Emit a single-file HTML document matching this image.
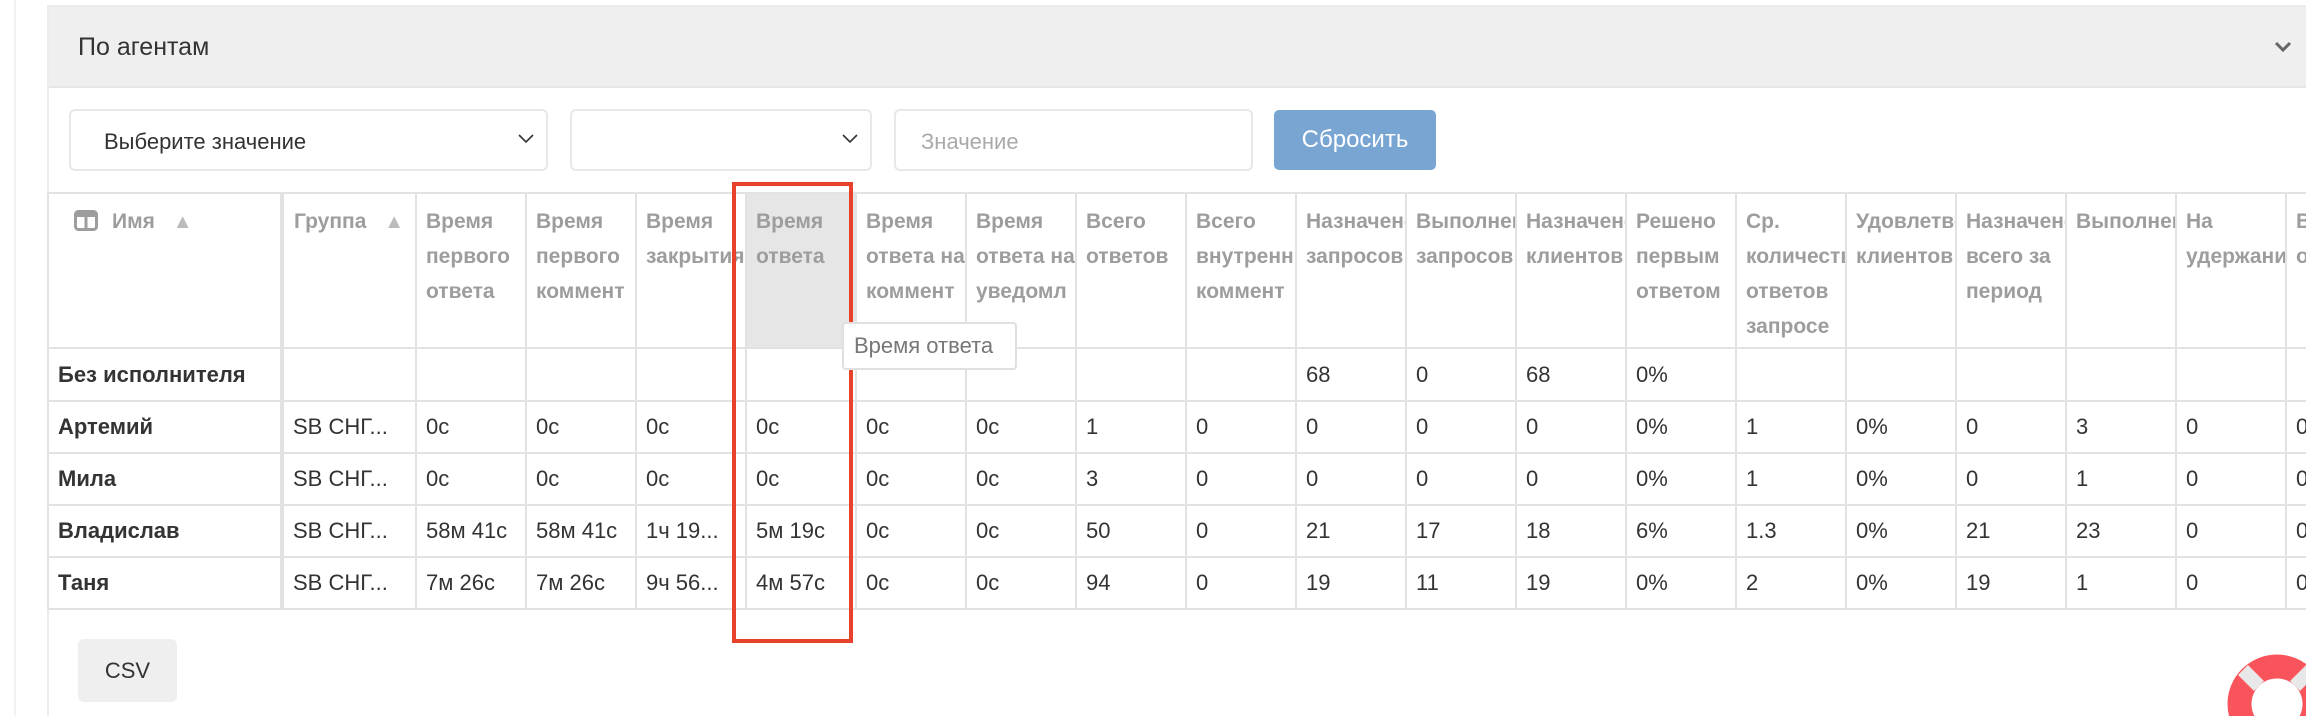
<!DOCTYPE html>
<html style="overflow:hidden"><head><meta charset="utf-8"><style>
*{box-sizing:border-box;margin:0;padding:0}
html,body{width:2306px;height:716px;overflow:hidden}
body{background:#fff;font-family:"Liberation Sans",Arial,sans-serif;position:relative}
.abs{position:absolute}
.vline{left:14px;top:0;width:2px;height:716px;background:#f2f2f2}
.panel{left:47px;top:5px;width:2300px;height:740px;border:2px solid #ececec;background:#fff}
.phead{left:49px;top:7px;width:2300px;height:81px;background:#efefef;border-bottom:2px solid #e6e6e6}
.title{left:78px;top:33px;font-size:25px;color:#333}
.sel{border:2px solid #e8e8e8;border-radius:6px;background:#fff;height:62px;top:109px;font-size:22px;color:#333}
.sel span{position:absolute;left:33px;top:18px}
.chev{position:absolute;top:22px}
.btn{left:1274px;top:110px;width:162px;height:60px;background:#79a5d3;border-radius:5px;color:#fff;font-size:24px;text-align:center;line-height:60px}
table{position:absolute;left:47px;top:192px;width:2348px;border-collapse:collapse;table-layout:fixed;font-size:22px}
td,th{border:2px solid #e2e2e2;overflow:hidden;white-space:nowrap;padding:0 9px;text-align:left}
th{vertical-align:top;height:155px;color:#9d9d9d;font-weight:bold;white-space:normal;line-height:35px;padding-top:10px;font-size:21px}
th div{width:118px}
td{height:52px;color:#333}
td.n{font-weight:bold;border-right:4px solid #e2e2e2}
th.n{border-right:4px solid #e2e2e2}
.hl{background:#e6e6e6}
.red{left:732px;top:182px;width:121px;height:461px;border:4px solid #e8412c}
.tip{left:842px;top:322px;width:175px;height:48px;border:2px solid #e0e0e0;border-radius:4px;background:#fff;color:#777;font-size:22px;line-height:44px;padding-left:10px;white-space:nowrap}
.csv{left:78px;top:639px;width:99px;height:63px;background:#efefef;border-radius:6px;text-align:center;line-height:63px;font-size:22px;color:#333}
</style></head><body>
<div class="abs vline"></div>
<div class="abs panel"></div>
<div class="abs phead"></div>
<div class="abs title">По агентам</div>
<svg class="abs" style="left:2274px;top:41px" width="18" height="12"><path d="M2 2 L9 9 L16 2" stroke="#666" stroke-width="3" fill="none"/></svg>
<div class="abs sel" style="left:69px;width:479px"><span>Выберите значение</span><svg class="chev" style="left:447px" width="16" height="12"><path d="M1 2 L8 9 L15 2" stroke="#333" stroke-width="1.6" fill="none"/></svg></div>
<div class="abs sel" style="left:570px;width:302px"><svg class="chev" style="left:270px" width="16" height="12"><path d="M1 2 L8 9 L15 2" stroke="#333" stroke-width="1.6" fill="none"/></svg></div>
<div class="abs sel" style="left:894px;width:359px;color:#aaa"><span style="left:25px">Значение</span></div>
<div class="abs btn">Сбросить</div>
<table>
<colgroup><col style="width:234px"><col style="width:134px"><col span="18" style="width:110px"></colgroup>
<tr>
<th class="n" style="padding-left:25px;white-space:nowrap"><svg width="24" height="21" style="vertical-align:-3px;margin-right:14px"><rect x="1.5" y="1.5" width="21" height="18" rx="3" fill="none" stroke="#9d9d9d" stroke-width="3"/><line x1="12" y1="2" x2="12" y2="19" stroke="#9d9d9d" stroke-width="3"/><rect x="2" y="2" width="20" height="5" fill="#9d9d9d"/></svg>Имя <span style="color:#bbb;font-size:20px;margin-left:12px">▲</span></th>
<th style="white-space:nowrap;padding-left:10px">Группа <span style="color:#bbb;font-size:20px;margin-left:12px">▲</span></th>
<th><div>Время первого ответа</div></th>
<th><div>Время первого коммент</div></th>
<th><div>Время закрытия</div></th>
<th class="hl"><div>Время ответа</div></th>
<th><div>Время ответа на коммент</div></th>
<th><div>Время ответа на уведомл</div></th>
<th><div>Всего ответов</div></th>
<th><div>Всего внутренних коммент</div></th>
<th><div>Назначено запросов</div></th>
<th><div>Выполнено запросов</div></th>
<th><div>Назначено клиентов</div></th>
<th><div>Решено первым ответом</div></th>
<th><div>Ср. количество ответов запросе</div></th>
<th><div>Удовлетворено клиентов</div></th>
<th><div>Назначено всего за период</div></th>
<th><div>Выполнено</div></th>
<th><div>На удержании</div></th>
<th><div>Всего ответов</div></th>
</tr>
<tr><td class="n" style="height:53px">Без исполнителя</td><td></td><td></td><td></td><td></td><td></td><td></td><td></td><td></td><td></td><td>68</td><td>0</td><td>68</td><td>0%</td><td></td><td></td><td></td><td></td><td></td><td></td></tr>
<tr><td class="n">Артемий</td><td>SB СНГ...</td><td>0с</td><td>0с</td><td>0с</td><td>0с</td><td>0с</td><td>0с</td><td>1</td><td>0</td><td>0</td><td>0</td><td>0</td><td>0%</td><td>1</td><td>0%</td><td>0</td><td>3</td><td>0</td><td>0</td></tr>
<tr><td class="n">Мила</td><td>SB СНГ...</td><td>0с</td><td>0с</td><td>0с</td><td>0с</td><td>0с</td><td>0с</td><td>3</td><td>0</td><td>0</td><td>0</td><td>0</td><td>0%</td><td>1</td><td>0%</td><td>0</td><td>1</td><td>0</td><td>0</td></tr>
<tr><td class="n">Владислав</td><td>SB СНГ...</td><td>58м 41с</td><td>58м 41с</td><td>1ч 19...</td><td>5м 19с</td><td>0с</td><td>0с</td><td>50</td><td>0</td><td>21</td><td>17</td><td>18</td><td>6%</td><td>1.3</td><td>0%</td><td>21</td><td>23</td><td>0</td><td>0</td></tr>
<tr><td class="n">Таня</td><td>SB СНГ...</td><td>7м 26с</td><td>7м 26с</td><td>9ч 56...</td><td>4м 57с</td><td>0с</td><td>0с</td><td>94</td><td>0</td><td>19</td><td>11</td><td>19</td><td>0%</td><td>2</td><td>0%</td><td>19</td><td>1</td><td>0</td><td>0</td></tr>
</table>
<div class="abs red"></div>
<div class="abs tip">Время ответа</div>
<div class="abs csv">CSV</div>
<svg class="abs" style="left:2220px;top:648px" width="86" height="68">
<circle cx="57" cy="56" r="37.5" fill="none" stroke="#f9545b" stroke-width="24"/>
<path d="M23 22 L39 38 M91 22 L75 38" stroke="#e8e8e8" stroke-width="14"/>
</svg>
</body></html>
